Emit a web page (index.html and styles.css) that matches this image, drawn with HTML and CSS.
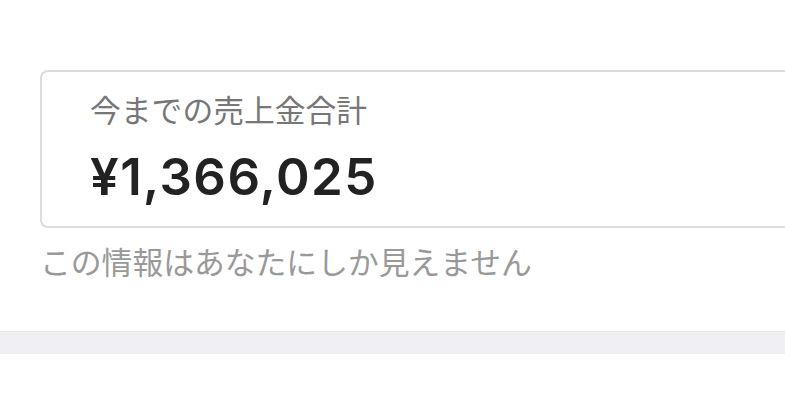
FILE: index.html
```html
<!DOCTYPE html>
<html lang="ja">
<head>
  <meta charset="UTF-8" />
  <meta name="viewport" content="width=device-width, initial-scale=1.0"/>
  <title>売上</title>
  <link rel="stylesheet" href="styles.css">
</head>
<body>
  <main class="sales">
    <div class="card">
      <p class="label">今までの売上金合計</p>
      <p class="amount">¥1,366,025</p>
    </div>
    <p class="note">この情報はあなたにしか見えません</p>
  </main>
  <div class="divider"></div>
</body>
</html>
```

FILE: styles.css
```css
* {
  box-sizing: border-box;
}
body {
  margin: 0;
  background: #fff;
  font-family: "Liberation Sans", "Noto Sans CJK JP", sans-serif;
  overflow: hidden;
}
.sales {
  padding: 70px 0 0 40px;
}
.card {
  border: 2px solid #dcdcdc;
  border-right: none;
  border-radius: 8px 0 0 8px;
  padding: 25px 0 21px 48px;
}
.label {
  margin: 0;
  font-size: 30.8px;
  line-height: 30px;
  color: #777;
}
.amount {
  margin: 22px 0 0;
  font-family: Inter, "Liberation Sans", sans-serif;
  font-size: 51px;
  line-height: 56px;
  font-weight: 600;
  letter-spacing: 1.4px;
  color: #222;
}
.note {
  margin: 21px 0 0;
  font-size: 30.8px;
  line-height: 30px;
  color: #999;
}
.divider {
  margin-top: 52px;
  height: 23px;
  background: #efeff4;
  border-top: 1px solid #e6e6ea;
}
```
